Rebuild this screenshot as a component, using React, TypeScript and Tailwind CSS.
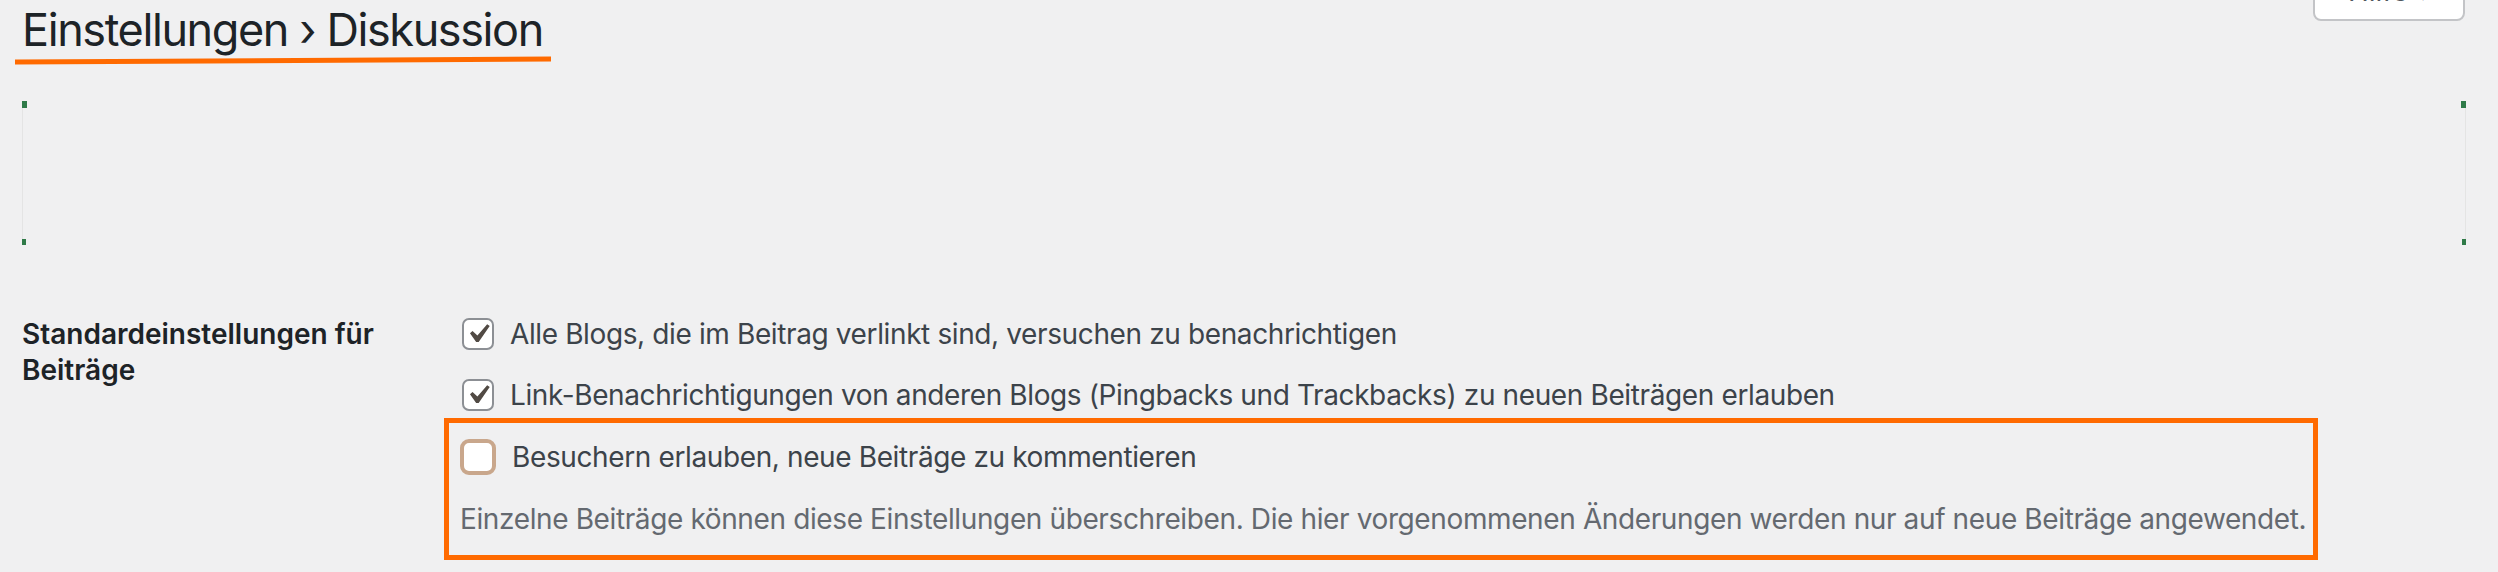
import React from 'react';

const font = { fontFamily: 'Inter, "Noto Sans", sans-serif' };

const CheckMark: React.FC = () => (
  <svg viewBox="0 0 20 20" className="w-[38px] h-[38px] shrink-0 -ml-[1px]">
    <path d="M14.83 4.89l1.34.94-5.81 8.38H9.02L5.78 9.67l1.34-1.25 2.57 2.4z" fill="#514a44" />
  </svg>
);

const Checkbox: React.FC<{ checked?: boolean }> = ({ checked }) =>
  checked ? (
    <span className="w-[32px] h-[32px] shrink-0 rounded-[7px] border-2 border-[#8c8f94] bg-white flex items-center justify-center overflow-hidden">
      <CheckMark />
    </span>
  ) : (
    <span className="w-[36px] h-[36px] shrink-0 rounded-[9px] border-[4px] border-[#c9a78c] bg-white" />
  );

const Option: React.FC<{ label: string; checked?: boolean }> = ({ label, checked }) => (
  <label className="flex items-center gap-[16px] text-[28px] leading-[40px] tracking-[-0.38px] text-[#3c434a]">
    <Checkbox checked={checked} />
    <span>{label}</span>
  </label>
);

export default function App() {
  return (
    <div className="w-full h-[572px] overflow-hidden bg-[#f0f0f1] pl-[22px] pr-[32px]" style={font}>
      {/* header */}
      <div className="flex justify-between items-start">
        <div className="flex flex-col pt-[2px]">
          <h1 className="text-[45px] leading-[56px] text-[#1d2327] font-normal tracking-[-1.4px]">
            Einstellungen › Diskussion
          </h1>
          <svg width="536" height="10" viewBox="0 0 536 10" className="-ml-[7px] -mt-[3px]">
            <path d="M2 7 L534 4" stroke="#ff6a00" strokeWidth="5" strokeLinecap="square" fill="none" />
          </svg>
        </div>
        <button className="-mt-[40px] h-[61px] w-[152px] mr-[1px] rounded-b-[8px] border-2 border-[#c3c4c7] bg-white text-[28px] leading-[28px] text-[#50575e] flex items-end justify-center pb-[14px]">
          Hilfe ▾
        </button>
      </div>

      {/* blanked notice */}
      <div className="relative mt-[36px] h-[144px] border-x border-[#e4e4e4]">
        <span className="absolute -left-px top-0 w-[5px] h-[7px] bg-[#2f7a48]" />
        <span className="absolute -left-px bottom-0 w-[4px] h-[6px] bg-[#2f7a48]" />
        <span className="absolute -right-px top-0 w-[5px] h-[7px] bg-[#2f7a48]" />
        <span className="absolute -right-px bottom-0 w-[4px] h-[6px] bg-[#2f7a48]" />
      </div>

      {/* settings row */}
      <div className="flex mt-[69px]">
        <div className="w-[440px] shrink-0 text-[28px] leading-[36px] font-semibold text-[#1d2327] pt-[2px]">
          Standardeinstellungen für
          <br />
          Beiträge
        </div>
        <div className="flex flex-col">
          <div className="flex flex-col gap-[21px]">
            <Option checked label="Alle Blogs, die im Beitrag verlinkt sind, versuchen zu benachrichtigen" />
            <Option checked label="Link-Benachrichtigungen von anderen Blogs (Pingbacks und Trackbacks) zu neuen Beiträgen erlauben" />
          </div>
          <div className="mt-[3px] -ml-[18px] w-[1874px] border-[5px] border-[#ff6a00] pl-[11px] pt-[14px] pb-[16px]">
            <Option label="Besuchern erlauben, neue Beiträge zu kommentieren" />
            <p className="mt-[22px] text-[28px] leading-[40px] tracking-[-0.38px] text-[#646970] whitespace-nowrap">
              Einzelne Beiträge können diese Einstellungen überschreiben. Die hier vorgenommenen Änderungen werden nur auf neue Beiträge angewendet.
            </p>
          </div>
        </div>
      </div>
    </div>
  );
}
